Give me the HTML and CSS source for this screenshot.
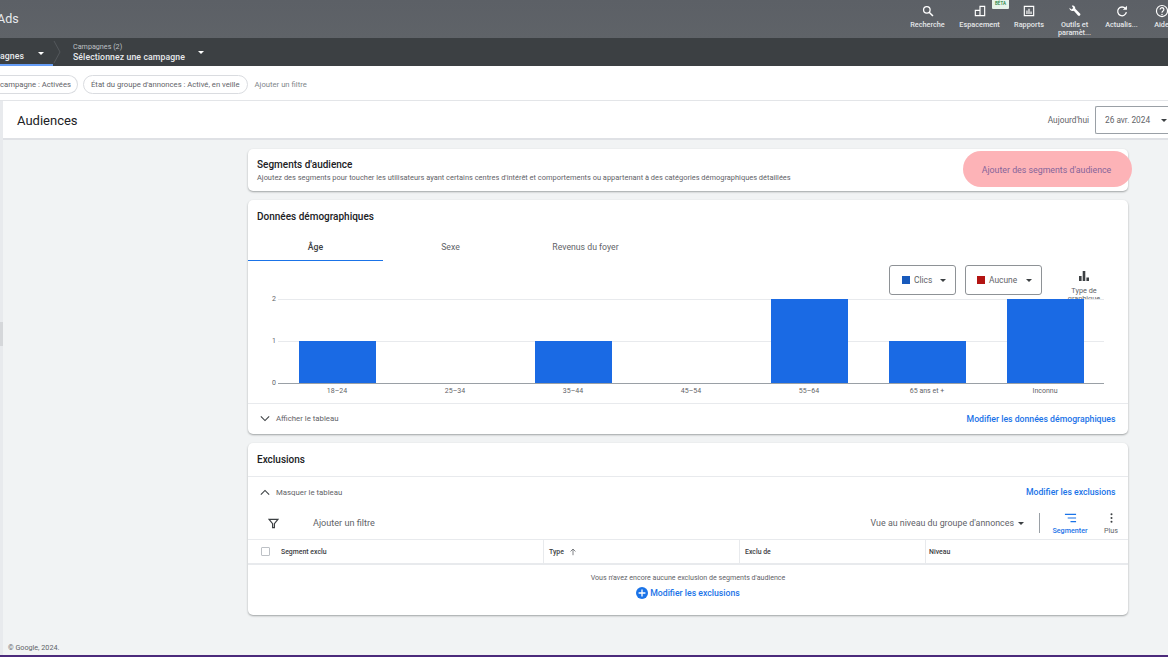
FILE: index.html
```html
<!DOCTYPE html>
<html lang="fr">
<head>
<meta charset="utf-8">
<title>Audiences</title>
<link rel="stylesheet" href="styles.css">
</head>
<body>
<div class="app">
  <header class="topbar">
    <div class="brand">Ads</div>
    <nav class="tools">
      <div class="tool tool-search">
        <svg viewBox="0 0 24 24" class="tool-icon"><circle cx="10" cy="10" r="5.6" fill="none" stroke="#fff" stroke-width="2.2"/><path d="M14 14l6.500 6.500" stroke="#fff" stroke-width="2.6"/></svg>
        <span>Recherche</span>
      </div>
      <div class="tool tool-space">
        <svg viewBox="0 0 24 24" class="tool-icon"><path d="M3 10h8V3h10v18H3z M5 12v7h6v-7z M13 5v14h6V5z" fill="#fff" fill-rule="evenodd"/></svg>
        <span>Espacement</span>
        <b class="beta">BÊTA</b>
      </div>
      <div class="tool tool-report">
        <svg viewBox="0 0 24 24" class="tool-icon"><path d="M3 3h18v18H3z M5 5v14h14V5z" fill="#fff" fill-rule="evenodd"/><path d="M7.500 11h2v6h-2zM11 8h2v9h-2zM14.500 13h2v4h-2z" fill="#fff"/></svg>
        <span>Rapports</span>
      </div>
      <div class="tool tool-wrench">
        <svg viewBox="0 0 24 24" class="tool-icon"><path d="M2.500 6.500 6 9.500 9 7 6.500 3C9.500 1.500 13 4 12.500 8l8.500 8.500c1 1-.5 5-3.500 3.500L10 11.500C6 13 2 10 2.500 6.500z" fill="#fff"/></svg>
        <span>Outils et paramèt...</span>
      </div>
      <div class="tool tool-refresh">
        <svg viewBox="0 0 24 24" class="tool-icon"><path d="M18 8a7.500 7.500 0 1 0 1.500 6" fill="none" stroke="#fff" stroke-width="2.200"/><path d="M20.500 3v7h-7z" fill="#fff"/></svg>
        <span>Actualis...</span>
      </div>
      <div class="tool tool-help">
        <svg viewBox="0 0 24 24" class="tool-icon"><circle cx="12" cy="12" r="9.500" fill="none" stroke="#fff" stroke-width="2"/><path d="M8.800 9.500a3.200 3.200 0 1 1 5 2.600c-1.200.9-1.800 1.400-1.800 2.900" fill="none" stroke="#fff" stroke-width="2"/><circle cx="12" cy="17.800" r="1.300" fill="#fff"/></svg>
        <span>Aide</span>
      </div>
    </nav>
  </header>

  <div class="crumbs">
    <div class="crumb crumb-active">
      <span class="crumb-main">agnes</span>
      <i class="caret caret-light"></i>
    </div>
    <svg class="crumb-sep" viewBox="0 0 8 28"><path d="M1 3l6 11-6 11" fill="none" stroke="#54585c"/></svg>
    <div class="crumb crumb-next">
      <div class="crumb-text">
        <span class="crumb-label">Campagnes (2)</span>
        <span class="crumb-main">Sélectionnez une campagne</span>
      </div>
      <i class="caret caret-light"></i>
    </div>
  </div>

  <div class="filters">
    <span class="pill pill-cut">campagne : Activées</span>
    <span class="pill">État du groupe d'annonces : Activé, en veille</span>
    <span class="add-filter">Ajouter un filtre</span>
  </div>

  <div class="page">
    <div class="rail"><span class="rail-handle"></span></div>
    <div class="page-body">
      <div class="titlebar">
        <h1>Audiences</h1>
        <div class="date-group">
          <span class="today">Aujourd'hui</span>
          <div class="date-box"><span>26 avr. 2024</span><i class="caret caret-dark"></i></div>
        </div>
      </div>

      <main class="content">
        <section class="card card-segments">
          <div>
            <h2>Segments d'audience</h2>
            <p class="sub">Ajoutez des segments pour toucher les utilisateurs ayant certains centres d'intérêt et comportements ou appartenant à des catégories démographiques détaillées</p>
          </div>
          <span class="highlight-btn">Ajouter des segments d'audience</span>
        </section>

        <section class="card card-demo">
          <h2 class="card-title">Données démographiques</h2>
          <div class="tabs">
            <span class="tab tab-on">Âge</span>
            <span class="tab">Sexe</span>
            <span class="tab">Revenus du foyer</span>
          </div>
          <div class="chart-tools">
            <div class="metric metric-clics"><i class="swatch swatch-blue"></i><span>Clics</span><i class="caret caret-dark"></i></div>
            <div class="metric metric-none"><i class="swatch swatch-red"></i><span>Aucune</span><i class="caret caret-dark"></i></div>
            <div class="chart-type">
              <svg viewBox="0 0 12 12" class="chart-type-icon"><path d="M1 6h2.600v5H1zM4.700 1h2.600v10H4.700zM8.400 7.500H11V11H8.400z" fill="#3c4043"/></svg>
              <span>Type de graphique</span>
            </div>
          </div>
          <div class="chart">
            <div class="y-axis"><span>2</span><span>1</span><span>0</span></div>
            <div class="plot-wrap">
              <div class="plot">
                <div class="col"><i class="bar bar-1"></i></div>
                <div class="col"></div>
                <div class="col"><i class="bar bar-1"></i></div>
                <div class="col"></div>
                <div class="col"><i class="bar bar-2"></i></div>
                <div class="col"><i class="bar bar-1"></i></div>
                <div class="col"><i class="bar bar-2"></i></div>
              </div>
              <div class="x-axis">
                <span>18–24</span><span>25–34</span><span>35–44</span><span>45–54</span><span>55–64</span><span>65 ans et +</span><span>Inconnu</span>
              </div>
            </div>
          </div>
          <div class="card-foot">
            <div class="toggle">
              <svg viewBox="0 0 12 8" class="chev"><path d="M1 1.500l5 5 5-5" fill="none" stroke="#3c4043" stroke-width="1.300"/></svg>
              <span>Afficher le tableau</span>
            </div>
            <a class="link">Modifier les données démographiques</a>
          </div>
        </section>

        <section class="card card-excl">
          <h2 class="card-title card-title-excl">Exclusions</h2>
          <div class="excl-toggle">
            <div class="toggle">
              <svg viewBox="0 0 12 8" class="chev"><path d="M1 6.500l5-5 5 5" fill="none" stroke="#3c4043" stroke-width="1.300"/></svg>
              <span>Masquer le tableau</span>
            </div>
            <a class="link">Modifier les exclusions</a>
          </div>
          <div class="table-tools">
            <svg viewBox="0 0 12 12" class="funnel"><path d="M1.200 1.500h9.600L7 6.200V10.500H5V6.200z" fill="none" stroke="#3c4043" stroke-width="1.300"/></svg>
            <span class="tools-filter">Ajouter un filtre</span>
            <div class="level"><span>Vue au niveau du groupe d'annonces</span><i class="caret caret-dark"></i></div>
            <i class="vline"></i>
            <div class="tbl-action tbl-seg">
              <svg viewBox="0 0 14 10" class="tbl-icon"><path d="M1 1h12M4 5h9M7 9h6" stroke="#1a73e8" stroke-width="1.300"/></svg>
              <span>Segmenter</span>
            </div>
            <div class="tbl-action tbl-more">
              <svg viewBox="0 0 14 10" class="tbl-icon"><circle cx="7" cy="1" r="1.100" fill="#3c4043"/><circle cx="7" cy="5" r="1.100" fill="#3c4043"/><circle cx="7" cy="9" r="1.100" fill="#3c4043"/></svg>
              <span>Plus</span>
            </div>
          </div>
          <div class="thead">
            <div class="th th-1"><i class="check"></i><span>Segment exclu</span></div>
            <div class="th th-2"><span>Type</span><svg viewBox="0 0 10 10" class="sort"><path d="M5 9V1.500M2 4.300l3-3 3 3" fill="none" stroke="#5f6368"/></svg></div>
            <div class="th th-3"><span>Exclu de</span></div>
            <div class="th th-4"><span>Niveau</span></div>
          </div>
          <div class="empty">
            <p>Vous n'avez encore aucune exclusion de segments d'audience</p>
            <a class="link link-add">
              <svg viewBox="0 0 12 12" class="plus"><circle cx="6" cy="6" r="6" fill="#1a73e8"/><path d="M6 2.600v6.800M2.600 6h6.800" stroke="#fff" stroke-width="1.300"/></svg>
              <span>Modifier les exclusions</span>
            </a>
          </div>
        </section>

        <footer class="copyright">© Google, 2024.</footer>
      </main>
    </div>
  </div>
  <div class="os-line"></div>
</div>
</body>
</html>
```

FILE: styles.css
```css
* { box-sizing: border-box; }
html, body { margin: 0; height: 100%; overflow: hidden; }
body { font-family: Roboto, "Liberation Sans", sans-serif; color: #3c4043; background: #f1f3f4; }
h1, h2, p { margin: 0; font-weight: 400; }

.app { display: flex; flex-direction: column; width: 1168px; height: 657px; overflow: hidden; }

/* top bar */
.topbar { flex: 0 0 38px; display: flex; justify-content: space-between; background: linear-gradient(#5c6066, #5f6368); color: #fff; }
.brand { margin-left: -3px; font-size: 12.500px; line-height: 38px; color: #e8eaed; }
.tools { display: flex; margin-right: -10px; }
.tool { position: relative; display: flex; flex-direction: column; align-items: center; padding-top: 4px; font-size: 7.300px; font-weight: 500; line-height: 8px; color: #e4e6e8; text-align: center; }
.tool span { display: block; }
.tool-icon { width: 14px; height: 14px; margin-bottom: 3px; }
.tool-search { width: 49px; }
.tool-space { width: 55px; }
.tool-report { width: 44px; }
.tool-wrench { width: 47px; padding-left: 8px; padding-right: 8px; }
.tool-refresh { width: 47px; }
.tool-help { width: 33px; }
.beta { position: absolute; left: 40px; top: 0; width: 17px; height: 9px; background: #e6f4ea; border-radius: 0 0 1px 1px; color: #188038; font-size: 4.500px; font-weight: 500; line-height: 8px; }

/* breadcrumb bar */
.crumbs { flex: 0 0 28px; display: flex; background: #3c4043; color: #fff; }
.crumb { display: flex; }
.crumb-active { width: 53px; height: 28px; padding-top: 13px; align-items: flex-start; justify-content: space-between; padding-right: 9px; border-bottom: 2px solid #669df6; }
.crumb-main { display: block; font-size: 8.700px; line-height: 11px; font-weight: 500; color: #e8eaed; letter-spacing: .1px; }
.crumb-active .caret { margin-top: 1px; }
.crumb-sep { width: 8px; height: 28px; }
.crumb-next { margin-left: 12px; padding-top: 4px; align-items: flex-start; }
.crumb-text { width: 125px; }
.crumb-label { display: block; font-size: 7.200px; line-height: 9px; color: #bdc1c6; }
.crumb-next .crumb-main { margin-top: 1px; }
.crumb-next .caret { margin-top: 9px; }

.caret { display: block; flex: none; width: 0; height: 0; border-left: 3px solid transparent; border-right: 3px solid transparent; }
.caret-light { border-top: 3px solid #fff; }
.caret-dark { border-top: 3px solid #3c4043; }

/* filter row */
.filters { flex: 0 0 35px; display: flex; align-items: center; gap: 5px; background: #fff; padding-top: 2px; border-bottom: 1px solid #e3e5e8; font-size: 7.700px; color: #5f6368; }
.pill { display: block; height: 19px; padding: 0 7px; border: 1px solid #dadce0; border-radius: 10px; line-height: 17px; white-space: nowrap; color: #5f6368; }
.pill-cut { width: 79px; margin-left: -1px; padding: 0 0 0 1px; border-left: 0; border-radius: 0 10px 10px 0; overflow: hidden; }
.add-filter { margin-left: 2px; color: #80868b; }

/* page */
.page { flex: 1; min-height: 0; display: flex; }
.rail { flex: 0 0 3px; background: #e8eaed; }
.rail-handle { display: block; width: 3px; height: 24px; margin-top: 221px; background: #d5d7da; }
.page-body { flex: 1; min-width: 0; display: flex; flex-direction: column; }

.titlebar { flex: 0 0 39px; display: flex; align-items: center; justify-content: space-between; background: #fff; border-bottom: 2px solid #dfe1e5; padding: 1px 0 0 14px; }
h1 { font-size: 13px; color: #202124; }
.date-group { display: flex; align-items: center; gap: 6px; }
.today { font-size: 8.300px; color: #5f6368; }
.date-box { display: flex; align-items: center; gap: 11px; width: 73px; height: 28px; padding-left: 9px; border: 1px solid #9aa0a6; border-right: 0; border-radius: 2px 0 0 2px; font-size: 8.300px; color: #5f6368; white-space: nowrap; }

.content { flex: 1; min-height: 0; padding: 9px 0 0 245px; display: flex; flex-direction: column; gap: 9px; }

.card { position: relative; width: 880px; background: #fff; border-radius: 5px; box-shadow: 0 1px 2px rgba(60,64,67,.45); flex: none; }
h2 { font-size: 10px; font-weight: 500; color: #202124; line-height: 12px; }

.card-segments { height: 42px; display: flex; justify-content: space-between; padding: 10px 9px 0; }
.sub { margin-top: 2px; font-size: 7.450px; line-height: 9px; color: #5f6368; white-space: nowrap; }
.highlight-btn { position: absolute; right: -4px; top: 2px; width: 169px; height: 36px; border-radius: 18px; background: #fdb3b7; color: #85649a; font-size: 8.800px; line-height: 38px; text-align: center; padding-right: 2px; }

.card-demo { height: 234px; }
.card-title { padding: 11px 9px 0; height: 33px; }
.tabs { display: flex; height: 28px; }
.tab { width: 135px; font-size: 8.700px; line-height: 28px; text-align: center; color: #5f6368; }
.tab-on { color: #3c4043; font-weight: 500; border-bottom: 1px solid #1a73e8; }

.chart-tools { height: 38px; overflow: hidden; display: flex; padding: 4px 0 0 641px; }
.metric { display: flex; align-items: center; height: 30px; border: 1px solid #8e9296; border-radius: 3px; font-size: 8.400px; color: #5f6368; }
.metric-clics { width: 67px; padding-left: 12px; }
.metric-none { width: 77px; padding-left: 11px; margin-left: 9px; }
.swatch { display: block; width: 8px; height: 8px; margin-right: 4px; }
.swatch-blue { background: #185abc; }
.swatch-red { background: #b31412; }
.metric .caret { margin-left: auto; margin-right: 9px; }
.chart-type { width: 40px; margin-left: 22px; padding-top: 5px; text-align: center; font-size: 7.300px; line-height: 7.500px; color: #5f6368; }
.chart-type-icon { display: block; width: 12px; height: 12px; margin: 0 auto 5px; }

.chart { display: flex; height: 104px; position: relative; }
.y-axis { width: 30px; height: 92px; margin-top: -4px; display: flex; flex-direction: column; justify-content: space-between; padding-right: 2px; text-align: right; font-size: 7px; line-height: 8px; color: #5f6368; }
.y-axis span { height: 8px; }
.plot-wrap { width: 826px; }
.plot { height: 85px; display: flex; align-items: flex-end; border-bottom: 1px solid #9aa0a6; background: linear-gradient(#e8eaed, #e8eaed) 0 0 / 100% 1px no-repeat, linear-gradient(#e8eaed, #e8eaed) 0 42px / 100% 1px no-repeat; }
.col { flex: 1; display: flex; justify-content: center; align-items: flex-end; }
.bar { display: block; width: 77px; background: #1a6ae4; }
.bar-1 { height: 42px; }
.bar-2 { height: 84px; }
.x-axis { display: flex; padding-top: 3px; font-size: 7px; line-height: 9px; color: #5f6368; }
.x-axis span { flex: 1; text-align: center; }

.card-foot { height: 30px; border-top: 1px solid #e8eaed; display: flex; align-items: center; justify-content: space-between; padding: 0 12.500px 0 12px; }
.toggle { display: flex; align-items: center; font-size: 7.800px; color: #5f6368; }
.chev { width: 10px; height: 7px; margin-right: 6px; }
.link { color: #1a73e8; font-size: 8.700px; font-weight: 500; }

.card-excl { height: 172px; }
.card-title-excl { height: 34px; border-bottom: 1px solid #e8eaed; }
.excl-toggle { height: 30px; display: flex; align-items: center; justify-content: space-between; padding: 0 12.500px 0 12px; }
.table-tools { height: 33px; display: flex; align-items: center; position: relative; border-bottom: 1px solid #e8eaed; }
.funnel { width: 11px; height: 11px; margin-left: 20px; }
.tools-filter { margin-left: 34px; font-size: 9.100px; color: #5f6368; }
.level { display: flex; align-items: center; margin-left: auto; font-size: 8.850px; color: #5f6368; }
.level .caret { margin-left: 4px; }
.vline { display: block; width: 1px; height: 20px; margin-left: 15px; background: #9aa0a6; }
.tbl-action { display: flex; flex-direction: column; align-items: center; padding-top: 2px; font-size: 7.200px; line-height: 8px; font-weight: 500; color: #5f6368; }
.tbl-icon { width: 13px; height: 10px; margin-bottom: 4px; }
.tbl-seg { width: 58px; margin-left: 1px; color: #1a73e8; }
.tbl-more { width: 24px; margin-right: 5px; font-weight: 400; }

.thead { height: 25px; display: flex; border-bottom: 2px solid #e8eaed; font-size: 6.900px; color: #3c4043; font-weight: 500; }
.th { display: flex; align-items: center; border-right: 1px solid #e8eaed; padding-left: 5px; }
.th-1 { width: 296px; padding-left: 13px; }
.th-2 { width: 196px; }
.th-3 { width: 186px; }
.th-4 { flex: 1; border-right: 0; padding-left: 3px; }
.check { display: block; width: 9px; height: 9px; margin-right: 11px; border: 1px solid #bdc1c6; border-radius: 1px; }
.sort { width: 8px; height: 8px; margin-left: 5px; }

.empty { text-align: center; padding-top: 8px; }
.empty p { font-size: 7.100px; line-height: 9px; color: #5f6368; }
.link-add { display: flex; align-items: center; justify-content: center; gap: 2px; margin-top: 5px; }
.plus { width: 12px; height: 12px; }

.copyright { margin: 19px 0 0 -240px; font-size: 7.200px; line-height: 9px; color: #5f6368; }
.os-line { flex: 0 0 2px; background: #4b2a7b; }
```
